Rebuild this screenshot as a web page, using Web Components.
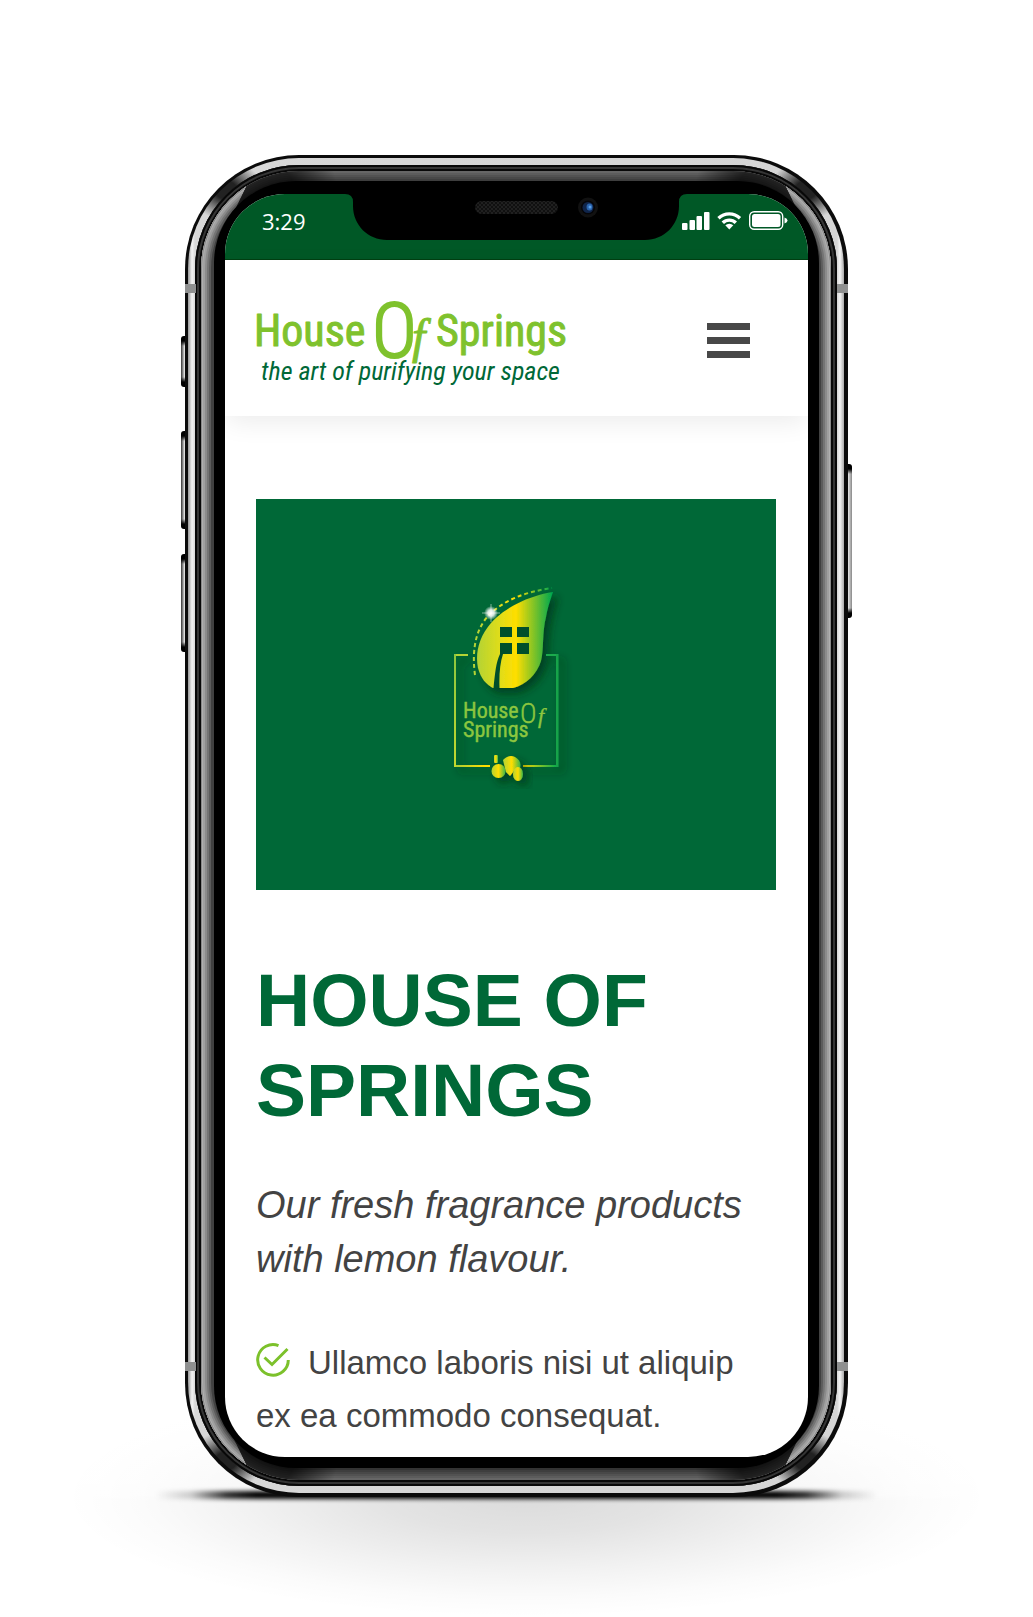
<!DOCTYPE html>
<html lang="en">
<head>
<meta charset="utf-8">
<meta name="viewport" content="width=device-width, initial-scale=1">
<title>House Of Springs</title>
<style>
  html { background: #fff; }
  body { margin: 0; font-family: "Liberation Sans", Arial, sans-serif; color: #434343; }
</style>
</head>
<body>
<product-stage>
  <phone-frame>
    <status-bar time="3:29"></status-bar>
    <site-header></site-header>
    <hero-banner></hero-banner>
    <product-intro>
      <span slot="title">House of Springs</span>
      <span slot="lead">Our fresh fragrance products with lemon flavour.</span>
      <check-item>Ullamco laboris nisi ut aliquip ex ea commodo consequat.</check-item>
    </product-intro>
  </phone-frame>
</product-stage>

<script>
const define = (name, html) => {
  const template = document.createElement('template');
  template.innerHTML = html;
  customElements.define(name, class extends HTMLElement {
    constructor() {
      super();
      this.attachShadow({ mode: 'open' }).append(template.content.cloneNode(true));
    }
    connectedCallback() {
      const clock = this.shadowRoot.querySelector('time');
      if (clock) clock.textContent = this.getAttribute('time');
    }
  });
};

define('product-stage', `
<style>
  :host { display: block; box-sizing: border-box; min-height: 100vh; padding: 155px 24px 120px; overflow: hidden; }
  .wrap { position: relative; max-width: 663px; margin: 0 auto; }
  .glow, .contact { position: absolute; z-index: 0; pointer-events: none; }
  .glow { left: -120px; right: -140px; bottom: -120px; height: 240px;
    background:
      linear-gradient(#fff 0, rgba(255,255,255,.45) 49%, transparent 52%),
      radial-gradient(ellipse closest-side at 50% 50%, rgba(0,0,0,.14), rgba(0,0,0,.11) 30%, rgba(0,0,0,.05) 62%, rgba(0,0,0,.015) 84%, transparent); }
  .contact { left: -30px; right: -30px; bottom: -2px; height: 8px;
    background: linear-gradient(90deg, transparent, rgba(0,0,0,.18) 5%, rgba(0,0,0,.8) 10%, #000 14%, #000 86%, rgba(0,0,0,.8) 90%, rgba(0,0,0,.18) 95%, transparent); filter: blur(2px); }
  slot { display: block; position: relative; z-index: 1; }
</style>
<div class="wrap"><div class="glow"></div><div class="contact"></div><slot></slot></div>`);

define('phone-frame', `
<style>
  :host { display: block; position: relative; }
  .edge { background: #0b0b0b; border-radius: 114px; padding: 3px 4px 4px 3px; position: relative; }
  .steel { border-radius: 111px; padding: 7px;
    background:
      radial-gradient(ellipse 36px 30px at 38px 32px, #222 30%, transparent),
      radial-gradient(ellipse 36px 30px at calc(100% - 38px) 32px, #222 30%, transparent),
      radial-gradient(ellipse 36px 30px at 38px calc(100% - 32px), #222 30%, transparent),
      radial-gradient(ellipse 36px 30px at calc(100% - 38px) calc(100% - 32px), #222 30%, transparent),
      linear-gradient(90deg, #999 0, #f4f4f4 4px, #d8d8d8 7px, #d5d5d5 calc(100% - 7px), #f4f4f4 calc(100% - 4px), #aaa); }
  .seam { border-radius: 104px; padding: 6px; background: #080808; box-shadow: inset 0 0 0 2px #080808, inset 0 0 0 4px #353535; }
  .bezel { position: relative; border-radius: 98px; padding: 10px 12px 12px 13px; background: #333;
    box-shadow: inset 0 0 0 2px #666, inset 0 0 0 4px #5c5c5c, inset 0 0 0 6px #525252, inset 0 0 0 8px #484848, inset 0 0 0 10px #3e3e3e; }
  .bezel::after { content: ""; position: absolute; inset: 0; border-radius: inherit; pointer-events: none;
    background:
      radial-gradient(circle 70px at 66px 22px, #000a 40%, transparent),
      radial-gradient(circle 70px at calc(100% - 66px) 22px, #000a 40%, transparent),
      radial-gradient(circle 70px at 66px calc(100% - 22px), #000a 40%, transparent),
      radial-gradient(circle 70px at calc(100% - 66px) calc(100% - 22px), #000a 40%, transparent); }
  .bezel::before { content: ""; position: absolute; inset: 0; border-radius: inherit; z-index: 1; pointer-events: none;
    box-shadow: inset 0 0 0 1px #888, inset 0 0 0 2px #b0b0b0, inset 0 0 0 4px #a0a0a0, inset 0 0 0 6px #8b8b8b, inset 0 0 0 8px #747474, inset 0 0 0 10px #5c5c5c, inset 0 0 0 13px #414141;
    clip-path: polygon(0 0, 48px 9px, 38px 30px, 24px 60px, 13px 110px, 13px calc(100% - 110px), 24px calc(100% - 60px), 38px calc(100% - 30px), 48px calc(100% - 9px), 0 100%, 100% 100%, calc(100% - 48px) calc(100% - 9px), calc(100% - 38px) calc(100% - 30px), calc(100% - 24px) calc(100% - 60px), calc(100% - 13px) calc(100% - 110px), calc(100% - 13px) 110px, calc(100% - 24px) 60px, calc(100% - 38px) 30px, calc(100% - 48px) 9px, 100% 0, 100% 100%, 0 100%); }
  .glass { position: relative; z-index: 2; border-radius: 82px; padding: 13px 11px 11px; background: #000; }
  .screen { border-radius: 60px; background: #fff; overflow: hidden; }
  .key { position: absolute; width: 7px; border-radius: 3px;
    background: linear-gradient(#000 5px, transparent 10px, transparent calc(100% - 10px), #000 calc(100% - 5px)), linear-gradient(90deg, #333, #ddd 50%, #888); }
  .left { left: -4px; } .right { right: -4px; }
  .mute { top: 181px; height: 51px; } .up { top: 276px; height: 98px; } .down { top: 399px; height: 98px; } .power { top: 309px; height: 154px; }
  .band { position: absolute; width: 11px; height: 9px; background: #8f9090; z-index: 3; }
  .bl { left: 0; } .br { right: 0; } .bt { top: 129px; } .bb { bottom: 126px; }
</style>
<i class="key left mute"></i><i class="key left up"></i><i class="key left down"></i><i class="key right power"></i>
<div class="edge">
  <i class="band bl bt"></i><i class="band br bt"></i><i class="band bl bb"></i><i class="band br bb"></i>
  <div class="steel"><div class="seam"><div class="bezel"><div class="glass"><div class="screen"><slot></slot></div></div></div></div></div>
</div>`);

define('status-bar', `
<style>
  :host { display: flex; justify-content: space-between; align-items: flex-start; position: relative; box-sizing: border-box; height: 66px;
    padding: 12px 20px 0 37px; background: #005826; color: #fff; border-bottom: 1px solid #003f12; }
  time { font: 22px/30px "Open Sans", "Noto Sans", sans-serif; }
  .notch { position: absolute; top: 0; left: 50%; margin-left: -172px; }
  .icons { margin-top: 4px; }
  svg { display: block; }
</style>
<time></time>
<svg class="notch" width="342" height="46" viewBox="0 0 342 46" aria-hidden="true">
  <defs><pattern id="mesh" width="4" height="4" patternUnits="userSpaceOnUse"><rect width="4" height="4" fill="#101010"/><circle cx="1" cy="1" r=".8" fill="#333"/><circle cx="3" cy="3" r=".8" fill="#333"/></pattern></defs>
  <path d="M0 0h342q-8 0-8 8v4c0 19-15 34-34 34H42C23 46 8 31 8 12V8q0-8-8-8z"/>
  <rect x="130" y="7" width="83" height="13" rx="6.5" fill="url(#mesh)"/>
  <circle cx="243" cy="13.500" r="10" fill="#111"/><circle cx="243" cy="13.500" r="7" fill="#050508"/><circle cx="243" cy="13.500" r="5.500" fill="#10254a"/><ellipse cx="244.500" cy="13" rx="3" ry="3.500" fill="#2a64ad"/><circle cx="245" cy="13" r="1.500" fill="#5aa0e8"/>
</svg>
<svg class="icons" width="106" height="20" viewBox="0 0 106 20" fill="#fff" role="img" aria-label="Signal, Wi-Fi, battery">
  <rect x="0" y="13" width="5.500" height="7" rx="1"/><rect x="7.500" y="10" width="5.500" height="10" rx="1"/><rect x="14.500" y="6" width="5.500" height="14" rx="1"/><rect x="22" y="2" width="5.500" height="18" rx="1"/>
  <g fill="none" stroke="#fff" stroke-width="3.400"><path d="M36.500 8.200a15.600 15.600 0 0 1 21.500 0"/><path d="M40.800 12.800a9.200 9.200 0 0 1 13 0"/></g><path d="M47.300 19.500l-4-4.200a5.800 5.800 0 0 1 8 0z"/>
  <rect x="67.700" y="1.700" width="33" height="17.500" rx="4.500" fill="none" stroke="#fff" stroke-width="1.400"/><rect x="70" y="4" width="28.500" height="13" rx="2.500"/><path d="M102.500 7.500q3 1 3 3t-3 3z"/>
</svg>`);

define('site-header', `
<style>
  :host { display: flex; align-items: center; justify-content: space-between; box-sizing: border-box; height: 156px; padding: 4px 58px 0 28px;
    position: relative; background: #fff; box-shadow: 0 8px 24px -2px rgba(0,0,0,.08); }
  svg { display: block; overflow: visible; }
  a { display: block; }
  text { font-family: "Roboto Condensed", Roboto, "Liberation Sans", sans-serif; }
  button { display: flex; flex-direction: column; gap: 7px; border: 0; padding: 0; background: none; width: 43px; }
  button i { height: 7px; width: 100%; background: #484848; }
</style>
<a href="#" aria-label="House Of Springs">
<svg width="320" height="120" viewBox="252 280 320 120">
  <g fill="#7fc22d" stroke="#7fc22d" stroke-linejoin="round">
    <text x="253" y="346" font-size="44" stroke-width="1">House</text>
    <text x="435" y="346" font-size="44" stroke-width="1">Springs</text>
    <text x="371" y="357" font-size="76" font-weight="300" stroke-width="2">O</text>
    <text x="411" y="353" font-size="48" stroke-width="1" style="font-family:'Liberation Serif',serif;font-style:italic">f</text>
  </g>
  <text x="260" y="380" font-size="26" font-style="italic" fill="#006837">the art of purifying your space</text>
</svg></a>
<button type="button" aria-label="Menu"><i></i><i></i><i></i></button>`);

define('hero-banner', `
<style>
  :host { display: flex; align-items: center; justify-content: center; margin: 83px 32px 0 31px; min-height: 391px; background: #006837; }
  svg { display: block; }
  text { font-family: "Roboto Condensed", Roboto, "Liberation Sans", sans-serif; }
</style>
<svg width="173" height="249" viewBox="0 0 173 249">
  <defs>
    <linearGradient id="leaf" gradientUnits="userSpaceOnUse" x1="47" y1="0" x2="122" y2="0"><stop offset="0" stop-color="#b4d334"/><stop offset=".28" stop-color="#dcdc1c"/><stop offset=".52" stop-color="#ffde00"/><stop offset="1" stop-color="#00a84f"/></linearGradient>
    <linearGradient id="line" gradientUnits="userSpaceOnUse" x1="24" y1="0" x2="128" y2="0"><stop offset="0" stop-color="#a6ce39"/><stop offset=".3" stop-color="#ffde00"/><stop offset=".65" stop-color="#ffde00"/><stop offset="1" stop-color="#00a84f"/></linearGradient>
    <linearGradient id="side" x1="0" y1="0" x2="0" y2="1"><stop offset="0" stop-color="#8cc63f"/><stop offset="1" stop-color="#c4d82e"/></linearGradient>
    <linearGradient id="lemon"><stop offset="0" stop-color="#b4d334"/><stop offset=".5" stop-color="#ffde00"/><stop offset="1" stop-color="#3ab54a"/></linearGradient>
    <radialGradient id="glint"><stop offset="0" stop-color="#fff"/><stop offset=".45" stop-color="#fff" stop-opacity=".85"/><stop offset="1" stop-color="#fff" stop-opacity="0"/></radialGradient>
    <filter id="shade" x="-30%" y="-30%" width="160%" height="160%"><feDropShadow dx="5" dy="5" stdDeviation="4" flood-color="#002a14" flood-opacity=".65"/></filter>
  </defs>
  <g filter="url(#shade)">
    <path d="M38 85H25" fill="none" stroke-width="2" stroke="#b4d334"/><path d="M116 85h12" fill="none" stroke-width="2" stroke="#1bab4d"/>
    <rect x="24" y="195" width="36" height="2" fill="url(#line)"/><rect x="93" y="195" width="35" height="2" fill="url(#line)"/>
    <rect x="24" y="84" width="2" height="113" fill="url(#side)"/><rect x="126" y="84" width="2.500" height="113" fill="#17a34a"/>
    <path d="M123 22C98 26 74 38 61 53C49 67 45 83 48 98C51 109 56 114 63 118H83C96 115 107 104 111 91C114 80 112 62 116 47C118 36 121 28 123 22z" fill="url(#leaf)"/>
  </g>
  <path d="M45 105C41 75 48 56 60 44C76 29 96 22 122 18" fill="none" stroke="url(#leaf)" stroke-width="2" stroke-dasharray="4 3"/>
  <path d="M70 57h12v10H70zM87 57h12v10H87zM87 73h12v11H87zM70 73h12v11H73C70 93 69 105 69.500 118H63.500C65 104 66 92 70 84z" fill="#004f2b"/>
  <circle cx="61" cy="43" r="7" fill="url(#glint)"/><path d="M61 34v18M52 43h18" stroke="#fff" stroke-width=".7" opacity=".7"/>
  <g fill="#8cc63f" stroke="#8cc63f" stroke-width=".4">
    <text x="33" y="148" font-size="22">House</text>
    <text x="33" y="167" font-size="22">Springs</text>
    <text x="90" y="153" font-size="28" font-weight="300">O</text>
    <text x="108" y="153" font-size="22" style="font-family:'Liberation Serif',serif;font-style:italic">f</text>
  </g>
  <g fill="url(#lemon)" filter="url(#shade)"><circle cx="68.500" cy="201" r="7"/><rect x="64" y="185" width="4" height="8" rx="1"/><path d="M73 190q6-6 12-3q7 4 5 11l-6 3-4 5-4-4z"/><ellipse cx="88" cy="204" rx="5" ry="7"/></g>
</svg>`);

define('product-intro', `
<style>
  :host { display: block; padding: 65px 32px 15px 31px; }
  h1 { margin: 0 0 43px; font-size: 75px; line-height: 90px; font-weight: 700; color: #006837; text-transform: uppercase; }
  p { margin: 0 0 50px; font-size: 38px; line-height: 54px; font-style: italic; }
</style>
<h1><slot name="title"></slot></h1>
<p><slot name="lead"></slot></p>
<div role="list"><slot></slot></div>`);

define('check-item', `
<style>
  :host { display: block; font-size: 33px; line-height: 53px; padding-right: 16px; }
  svg { width: 34px; height: 34px; margin-right: 18px; vertical-align: -3px; }
</style>
<svg viewBox="0 0 34 34" fill="none" stroke="#7cc12b" stroke-width="3" aria-hidden="true"><path d="M22.500 2.600A15.300 15.300 0 1 0 32.300 17"/><path d="M8.500 14.500l7.500 7L31.500 6"/></svg><slot></slot>`);

document.querySelectorAll('check-item').forEach(item => item.setAttribute('role', 'listitem'));
</script>
</body>
</html>
